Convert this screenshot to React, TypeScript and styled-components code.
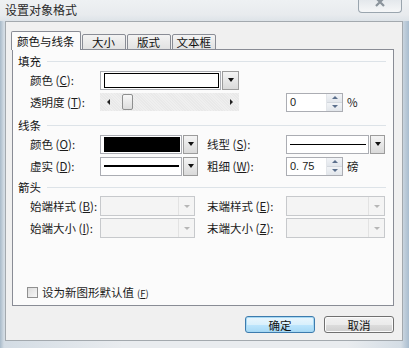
import styled, { createGlobalStyle } from "styled-components";

const GlobalStyle = createGlobalStyle`
  html, body {
    margin: 0;
    padding: 0;
  }
  body {
    font-family: "Noto Sans CJK SC", "Liberation Sans", sans-serif;
    font-size: 11.5px;
    color: #1c1c1c;
    background: #dfe6ec;
  }
`;

const Window = styled.div`
  width: 409px;
  height: 348px;
  box-sizing: border-box;
  display: flex;
  flex-direction: column;
  overflow: hidden;
  background: linear-gradient(to right, #a8bac9 0, #d3dce4 4px, #e9ecef 30%, #e9ecef 85%, #d4dde5 98%, #a9bdcf 100%);
`;

const TitleBar = styled.div`
  height: 21px;
  display: flex;
  align-items: flex-start;
  justify-content: space-between;
  background: linear-gradient(to bottom, #eef1f3 0, #e8ebee 70%, #dde3e8 100%);
`;

const Title = styled.div`
  padding: 2px 0 0 5px;
  font-size: 12px;
  line-height: 16px;
  color: #2a2a2a;
`;

const CloseButton = styled.div`
  width: 44px;
  height: 13px;
  margin-right: 7px;
  box-sizing: border-box;
  border: 1px solid #9aa5ae;
  border-top: none;
  border-radius: 0 0 4px 4px;
  background: linear-gradient(to bottom, #e4e8ec, #f6f7f8);
  display: flex;
  justify-content: center;
  overflow: hidden;
`;

const Client = styled.div`
  margin: 0 6px 0 5px;
  border: 1px solid #a3a9ae;
  background: #f0f0f0;
  padding: 9px 8px 7px 6px;
  display: flex;
  flex-direction: column;
`;

const TabRow = styled.div`
  height: 19px;
  display: flex;
  align-items: flex-end;
  gap: 1px;
  margin-left: -1px;
`;

const Tab = styled.div<{ $active?: boolean }>`
  position: relative;
  z-index: ${(p) => (p.$active ? 2 : 0)};
  box-sizing: border-box;
  height: ${(p) => (p.$active ? "19px" : "16px")};
  min-width: 44px;
  padding: 0 ${(p) => (p.$active ? "5px" : "4px")};
  border: 1px solid #898c95;
  border-bottom: ${(p) => (p.$active ? "none" : "1px solid #898c95")};
  border-radius: 2px 2px 0 0;
  background: ${(p) => (p.$active ? "#fbfbfb" : "linear-gradient(to bottom, #f3f3f3, #e2e2e2)")};
  display: flex;
  align-items: center;
  justify-content: center;
  line-height: 14px;
  color: #111;
`;

const Panel = styled.div`
  position: relative;
  z-index: 1;
  margin-top: -1px;
  height: 257px;
  box-sizing: border-box;
  border: 1px solid #898c95;
  background: #fbfbfb;
  padding: 4px 7px 6px 5px;
  display: flex;
  flex-direction: column;
`;

const Section = styled.div<{ $top: number }>`
  margin-top: ${(p) => p.$top}px;
`;

const Heading = styled.div`
  height: 14px;
  line-height: 14px;
  display: flex;
  align-items: center;
  gap: 6px;
  color: #111;

  &::after {
    content: "";
    flex: 1;
    height: 1px;
    background: #dde3e8;
  }
`;

const FormGrid = styled.div`
  margin-top: 1px;
  padding-left: 12px;
  display: grid;
  grid-template-columns: 70px 97px 89px 1fr;
  grid-auto-rows: 22px;
  align-items: center;
`;

const Label = styled.div<{ $right?: boolean }>`
  grid-column: ${(p) => (p.$right ? 3 : 1)};
  padding-left: ${(p) => (p.$right ? "10px" : "0")};
  white-space: nowrap;
  line-height: 14px;
`;

const Key = styled.u`
  text-decoration: underline;
  text-underline-offset: 1px;
`;

const Cell = styled.div<{ $col: number; $span?: number }>`
  grid-column: ${(p) => p.$col} / span ${(p) => p.$span ?? 1};
  display: flex;
  align-items: center;
  gap: 4px;
`;

const ComboWrap = styled.div`
  display: flex;
  gap: 1px;
  height: 19px;
`;

const Field = styled.div<{ $w: number }>`
  width: ${(p) => p.$w}px;
  box-sizing: border-box;
  border: 1px solid #abadb3;
  background: #fff;
  padding: 1px 1px 1px 3px;
  display: flex;
  align-items: center;
`;

const Swatch = styled.div<{ $color: string }>`
  flex: 1;
  align-self: stretch;
  border: 1px solid #000;
  background: ${(p) => p.$color};
`;

const LineSample = styled.div<{ $weight: number }>`
  flex: 1;
  height: ${(p) => p.$weight}px;
  background: #000;
  margin-right: 1px;
`;

const DropButton = styled.div<{ $w: number }>`
  width: ${(p) => p.$w}px;
  box-sizing: border-box;
  border: 1px solid #9c9c9c;
  background: linear-gradient(to bottom, #f4f4f4, #dadada);
  display: flex;
  align-items: center;
  justify-content: center;

  &::before {
    content: "";
    border-left: 3.5px solid transparent;
    border-right: 3.5px solid transparent;
    border-top: 4px solid #111;
  }
`;

const DisabledCombo = styled.div<{ $w: number }>`
  width: ${(p) => p.$w}px;
  height: 20px;
  box-sizing: border-box;
  border: 1px solid #c7c9cc;
  background: #f4f4f4;
  display: flex;
  justify-content: flex-end;
`;

const DisabledArrow = styled.div`
  width: 15px;
  border-left: 1px solid #e2e2e2;
  display: flex;
  align-items: center;
  justify-content: center;

  &::before {
    content: "";
    border-left: 3px solid transparent;
    border-right: 3px solid transparent;
    border-top: 3px solid #b6b6b6;
  }
`;

const Slider = styled.div`
  width: 139px;
  height: 18px;
  display: flex;
  background: repeating-linear-gradient(45deg, #e9e9e9 0, #e9e9e9 1px, #efefef 1px, #efefef 2px);
`;

const SliderArrow = styled.div<{ $dir: "left" | "right" }>`
  width: 16px;
  display: flex;
  align-items: center;
  justify-content: center;

  &::before {
    content: "";
    border-top: 3px solid transparent;
    border-bottom: 3px solid transparent;
    ${(p) => (p.$dir === "left" ? "border-right: 3px solid #222;" : "border-left: 3px solid #222;")}
  }
`;

const SliderTrack = styled.div`
  flex: 1;
  display: flex;
  align-items: center;
`;

const Thumb = styled.div`
  width: 11px;
  height: 16px;
  margin-left: 6px;
  box-sizing: border-box;
  border: 1px solid #8e8f8f;
  border-radius: 2px;
  background: linear-gradient(to bottom, #f7f7f7, #dcdcdc);
`;

const Spinner = styled.div`
  width: 57px;
  height: 19px;
  box-sizing: border-box;
  border: 1px solid #abadb3;
  background: #fff;
  display: flex;
`;

const SpinValue = styled.div`
  flex: 1;
  padding-left: 3px;
  line-height: 17px;
  font-family: "Liberation Sans", "Noto Sans CJK SC", sans-serif;
  font-size: 11px;
`;

const SpinButtons = styled.div`
  width: 15px;
  display: flex;
  flex-direction: column;
  border-left: 1px solid #e3e6ea;
`;

const SpinHalf = styled.div<{ $up?: boolean }>`
  flex: 1;
  display: flex;
  align-items: center;
  justify-content: center;
  background: linear-gradient(to bottom, #f2f4f7, #e2e6eb);
  border-bottom: ${(p) => (p.$up ? "1px solid #d3d8de" : "none")};

  &::before {
    content: "";
    border-left: 3px solid transparent;
    border-right: 3px solid transparent;
    ${(p) => (p.$up ? "border-bottom: 3px solid #5b6f8c;" : "border-top: 3px solid #5b6f8c;")}
  }
`;

const Unit = styled.span`
  line-height: 14px;
`;

const CheckRow = styled.label`
  margin-top: auto;
  padding-left: 9px;
  height: 14px;
  display: flex;
  align-items: center;
  gap: 4px;
  line-height: 14px;
`;

const CheckBox = styled.span`
  width: 11px;
  height: 11px;
  box-sizing: border-box;
  border: 1px solid #8f8f8f;
  background: linear-gradient(135deg, #dcdcdc, #f7f7f7);
`;

const Small = styled.span`
  font-size: 9.5px;
  margin-left: 3px;
`;

const ButtonRow = styled.div`
  margin-top: 10px;
  display: flex;
  justify-content: flex-end;
  gap: 9px;
`;

const Button = styled.button<{ $default?: boolean }>`
  width: 70px;
  height: 17px;
  padding: 0;
  font: inherit;
  line-height: 14px;
  color: #111;
  border-radius: 3px;
  border: 1px solid ${(p) => (p.$default ? "#3d7bad" : "#707070")};
  box-shadow: ${(p) => (p.$default ? "inset 0 0 0 1px #a6d8f3" : "inset 0 0 0 1px #fbfbfb")};
  background: ${(p) =>
    p.$default
      ? "linear-gradient(to bottom, #eaf6fd 0, #d9f0fc 50%, #bee6fd 51%, #a7d9f5 100%)"
      : "linear-gradient(to bottom, #f2f2f2 0, #ebebeb 50%, #dddddd 51%, #cfcfcf 100%)"};
`;

const Combo = ({ field, button, children }: { field: number; button: number; children: React.ReactNode }) => (
  <ComboWrap>
    <Field $w={field}>{children}</Field>
    <DropButton $w={button} />
  </ComboWrap>
);

const SpinBox = ({ value }: { value: string }) => (
  <Spinner>
    <SpinValue>{value}</SpinValue>
    <SpinButtons>
      <SpinHalf $up />
      <SpinHalf />
    </SpinButtons>
  </Spinner>
);

const tabs = ["颜色与线条", "大小", "版式", "文本框"];

export default function App() {
  return (
    <>
      <GlobalStyle />
      <Window>
        <TitleBar>
          <Title>设置对象格式</Title>
          <CloseButton>
            <svg width="12" height="10" viewBox="0 0 12 10" style={{ marginTop: -3 }}>
              <path d="M2 1 L10 9 M10 1 L2 9" stroke="#8a939b" strokeWidth="2.2" fill="none" />
            </svg>
          </CloseButton>
        </TitleBar>
        <Client>
          <TabRow>
            {tabs.map((t, i) => (
              <Tab key={t} $active={i === 0}>
                {t}
              </Tab>
            ))}
          </TabRow>
          <Panel>
            <Section $top={0}>
              <Heading>填充</Heading>
              <FormGrid>
                <Label>
                  颜色 (<Key>C</Key>):
                </Label>
                <Cell $col={2} $span={2}>
                  <Combo field={121} button={17}>
                    <Swatch $color="#fff" />
                  </Combo>
                </Cell>
                <Label>
                  透明度 (<Key>T</Key>):
                </Label>
                <Cell $col={2} $span={2}>
                  <Slider>
                    <SliderArrow $dir="left" />
                    <SliderTrack>
                      <Thumb />
                    </SliderTrack>
                    <SliderArrow $dir="right" />
                  </Slider>
                </Cell>
                <Cell $col={4}>
                  <SpinBox value="0" />
                  <Unit>%</Unit>
                </Cell>
              </FormGrid>
            </Section>

            <Section $top={5}>
              <Heading>线条</Heading>
              <FormGrid>
                <Label>
                  颜色 (<Key>O</Key>):
                </Label>
                <Cell $col={2}>
                  <Combo field={82} button={15}>
                    <Swatch $color="#000" />
                  </Combo>
                </Cell>
                <Label $right>
                  线型 (<Key>S</Key>):
                </Label>
                <Cell $col={4}>
                  <Combo field={83} button={15}>
                    <LineSample $weight={1} />
                  </Combo>
                </Cell>
                <Label>
                  虚实 (<Key>D</Key>):
                </Label>
                <Cell $col={2}>
                  <Combo field={82} button={15}>
                    <LineSample $weight={2} />
                  </Combo>
                </Cell>
                <Label $right>
                  粗细 (<Key>W</Key>):
                </Label>
                <Cell $col={4}>
                  <SpinBox value="0. 75" />
                  <Unit>磅</Unit>
                </Cell>
              </FormGrid>
            </Section>

            <Section $top={3}>
              <Heading>箭头</Heading>
              <FormGrid>
                <Label>
                  始端样式 (<Key>B</Key>):
                </Label>
                <Cell $col={2}>
                  <DisabledCombo $w={95}>
                    <DisabledArrow />
                  </DisabledCombo>
                </Cell>
                <Label $right>
                  末端样式 (<Key>E</Key>):
                </Label>
                <Cell $col={4}>
                  <DisabledCombo $w={99}>
                    <DisabledArrow />
                  </DisabledCombo>
                </Cell>
                <Label>
                  始端大小 (<Key>I</Key>):
                </Label>
                <Cell $col={2}>
                  <DisabledCombo $w={95}>
                    <DisabledArrow />
                  </DisabledCombo>
                </Cell>
                <Label $right>
                  末端大小 (<Key>Z</Key>):
                </Label>
                <Cell $col={4}>
                  <DisabledCombo $w={99}>
                    <DisabledArrow />
                  </DisabledCombo>
                </Cell>
              </FormGrid>
            </Section>

            <CheckRow>
              <CheckBox />
              <span>
                设为新图形默认值<Small>(<Key>F</Key>)</Small>
              </span>
            </CheckRow>
          </Panel>
          <ButtonRow>
            <Button $default>确定</Button>
            <Button>取消</Button>
          </ButtonRow>
        </Client>
      </Window>
    </>
  );
}
